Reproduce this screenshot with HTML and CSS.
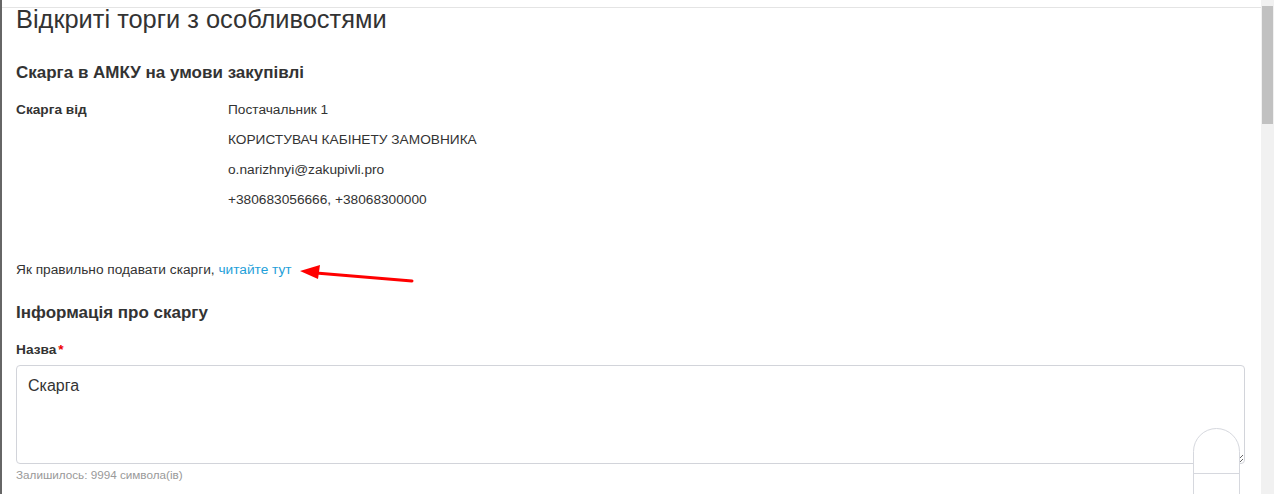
FILE: index.html
```html
<!DOCTYPE html>
<html lang="uk">

<head>
  <meta charset="UTF-8" />
  <meta name="viewport" content="width=device-width, initial-scale=1.0" />
  <title>Скарга в АМКУ</title>
  <link rel="stylesheet" href="styles.css">
</head>

<body>
  <div class="frame">
    <div class="content">
      <h1 class="page-title">Відкриті торги з особливостями</h1>

      <h2 class="section-title">Скарга в АМКУ на умови закупівлі</h2>

      <div class="info-row">
        <div class="info-label">Скарга від</div>
        <div class="info-values">
          <div>Постачальник 1</div>
          <div>КОРИСТУВАЧ КАБІНЕТУ ЗАМОВНИКА</div>
          <div>o.narizhnyi@zakupivli.pro</div>
          <div>+380683056666, +38068300000</div>
        </div>
      </div>

      <p class="hint">Як правильно подавати скарги, <a href="#" class="link">читайте тут</a></p>

      <h2 class="section-title second">Інформація про скаргу</h2>

      <label class="field-label" for="title">Назва<span class="required">*</span></label>
      <textarea id="title" class="field">Скарга</textarea>
      <div class="counter">Залишилось: 9994 символа(ів)</div>
    </div>
  </div>

  <div class="scrollbar">
    <div class="scrollbar-thumb"></div>
  </div>

  <!-- annotation arrow -->
  <svg class="arrow" width="130" height="30" viewBox="0 0 130 30">
    <line x1="16" y1="11" x2="112" y2="19" stroke="#f00" stroke-width="3" stroke-linecap="round" />
    <polygon points="0,9 20,3 18,17" fill="#f00" />
  </svg>

  <!-- floating widget -->
  <div class="widget">
    <div class="widget-divider"></div>
  </div>
</body>

</html>
```

FILE: styles.css
```css
html,
body {
  margin: 0;
  padding: 0;
  height: 494px;
  overflow: hidden;
}

body {
  display: flex;
  font-family: 'Liberation Sans', Arial, sans-serif;
  color: #333;
  background-color: #fff;
  position: relative;
}

.frame {
  flex: 1;
  border-left: 2px solid #666;
  padding-top: 7px;
}

.content {
  border-top: 1px solid #e4e4e4;
  padding: 0 16px 0 14px;
}

.page-title {
  margin: 0;
  font-size: 25.4px;
  font-weight: normal;
  line-height: 22px;
}

.section-title {
  margin: 33px 0 0;
  font-size: 17px;
  font-weight: bold;
  line-height: 20px;
}

.section-title.second {
  margin-top: 23px;
}

.info-row {
  display: flex;
  margin-top: 12px;
  font-size: 13.7px;
  line-height: 30px;
}

.info-label {
  width: 212px;
  font-weight: bold;
}

.hint {
  margin: 45px 0 0;
  font-size: 13.7px;
  line-height: 20px;
}

.link {
  color: #1f9fd9;
  text-decoration: none;
}

.field-label {
  display: block;
  margin-top: 17px;
  font-size: 13.7px;
  font-weight: bold;
  line-height: 20px;
}

.required {
  color: #e00;
  margin-left: 2px;
}

.field {
  display: block;
  box-sizing: border-box;
  width: 100%;
  height: 99px;
  margin-top: 5px;
  padding: 10px 11px;
  border: 1px solid #d2d4da;
  border-radius: 4px;
  font-family: 'Liberation Sans', Arial, sans-serif;
  font-size: 16px;
  line-height: 20px;
  color: #333;
  resize: vertical;
}

.counter {
  margin-top: 3px;
  font-size: 11.7px;
  line-height: 16px;
  color: #999;
}

.scrollbar {
  width: 13px;
  background-color: #f1f1f1;
  padding-top: 6px;
  box-sizing: border-box;
}

.scrollbar-thumb {
  width: 11px;
  height: 118px;
  margin-left: 1px;
  background-color: #c1c1c1;
}

.arrow {
  position: absolute;
  left: 300px;
  top: 262px;
}

.widget {
  position: absolute;
  left: 1193px;
  top: 428px;
  width: 47px;
  height: 80px;
  box-sizing: border-box;
  border: 1px solid #d6d8de;
  border-radius: 24px 24px 0 0;
  background-color: #fff;
}

.widget-divider {
  margin-top: 44px;
  border-top: 1px solid #d6d8de;
}
```
